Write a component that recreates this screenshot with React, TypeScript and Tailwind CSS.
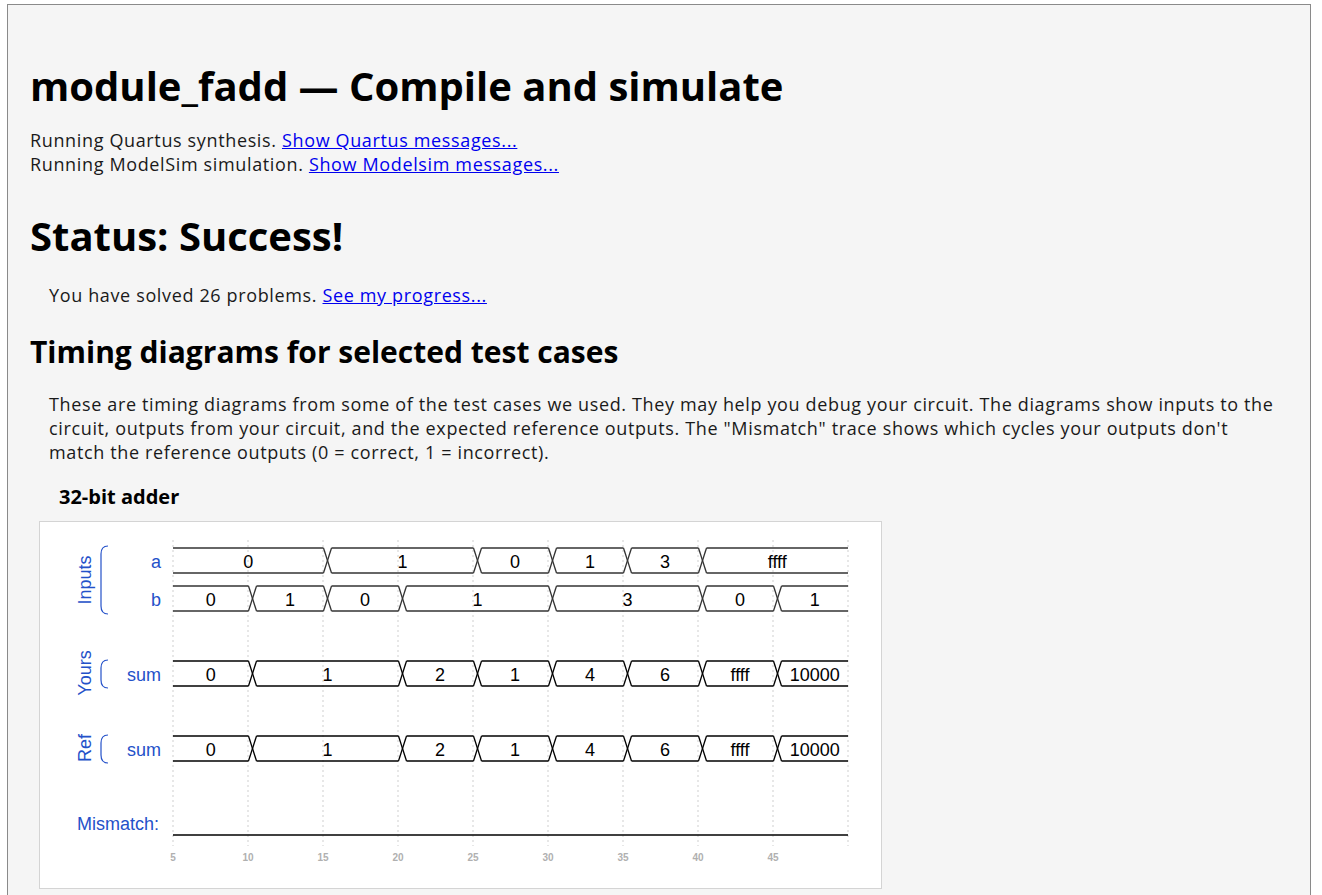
import React from "react";

type Row = { label: string; top: number; times: number[]; values: string[]; stroke: string };

const X0 = 173;
const px = (t: number) => X0 + (t - 5) * 15;
const END = px(50);

const rows: Row[] = [
  { label: "a", top: 548, times: [15, 25, 30, 35, 40], values: ["0", "1", "0", "1", "3", "ffff"], stroke: "#333" },
  { label: "b", top: 586, times: [10, 15, 20, 30, 40, 45], values: ["0", "1", "0", "1", "3", "0", "1"], stroke: "#333" },
  { label: "sum", top: 661, times: [10, 20, 25, 30, 35, 40, 45], values: ["0", "1", "2", "1", "4", "6", "ffff", "10000"], stroke: "#000" },
  { label: "sum", top: 736, times: [10, 20, 25, 30, 35, 40, 45], values: ["0", "1", "2", "1", "4", "6", "ffff", "10000"], stroke: "#000" },
];

const BLUE = "#2451c9";

function Bus({ row }: { row: Row }) {
  const y0 = row.top;
  const y1 = row.top + 25;
  const edges = [X0, ...row.times.map((t) => px(t)), END];
  const parts: React.ReactNode[] = [];
  for (let i = 0; i < edges.length - 1; i++) {
    const a = i === 0 ? edges[i] : edges[i] + 8.5;
    const b = i === edges.length - 2 ? edges[i + 1] : edges[i + 1] + 0.5;
    parts.push(
      <g key={"s" + i}>
        <line x1={a} y1={y0} x2={b} y2={y0} stroke={row.stroke} strokeWidth={1.3} />
        <line x1={a} y1={y1} x2={b} y2={y1} stroke={row.stroke} strokeWidth={1.3} />
        <text x={(a + b) / 2} y={y0 + 19.5} textAnchor="middle" fontSize={18} fill="#000">
          {row.values[i]}
        </text>
      </g>
    );
  }
  row.times.forEach((t, i) => {
    const a = px(t) + 0.5;
    const b = px(t) + 8.5;
    parts.push(
      <g key={"x" + i}>
        <line x1={a} y1={y0} x2={b} y2={y1} stroke={row.stroke} strokeWidth={1.3} />
        <line x1={a} y1={y1} x2={b} y2={y0} stroke={row.stroke} strokeWidth={1.3} />
      </g>
    );
  });
  return (
    <g>
      <text x={161} y={y0 + 19.5} textAnchor="end" fontSize={18} fill={BLUE}>
        {row.label}
      </text>
      {parts}
    </g>
  );
}

function Bracket({ y0, y1 }: { y0: number; y1: number }) {
  return (
    <path
      d={`M108 ${y0} Q101 ${y0} 101 ${y0 + 8} L101 ${y1 - 8} Q101 ${y1} 108 ${y1}`}
      fill="none"
      stroke={BLUE}
      strokeWidth={1.2}
    />
  );
}

function Group({ text, cy }: { text: string; cy: number }) {
  return (
    <text
      x={85}
      y={cy}
      transform={`rotate(-90 85 ${cy})`}
      textAnchor="middle"
      dominantBaseline="central"
      fontSize={18}
      fill={BLUE}
    >
      {text}
    </text>
  );
}

function TimingDiagram() {
  const ticks = [5, 10, 15, 20, 25, 30, 35, 40, 45, 50];
  return (
    <svg width={841} height={366} viewBox="40 522 841 366" style={{ fontFamily: "'Liberation Sans', Arial, sans-serif", letterSpacing: "0" }}>
      {ticks.map((t) => (
        <line key={t} x1={px(t)} y1={540} x2={px(t)} y2={846} stroke="#cfcfcf" strokeWidth={1} strokeDasharray="2 3" />
      ))}
      <Group text="Inputs" cy={580} />
      <Bracket y0={546} y1={614} />
      <Group text="Yours" cy={673} />
      <Bracket y0={660} y1={688} />
      <Group text="Ref" cy={748} />
      <Bracket y0={735} y1={763} />
      {rows.map((r, i) => (
        <Bus key={i} row={r} />
      ))}
      <text x={77} y={830} fontSize={18} fill={BLUE}>
        Mismatch:
      </text>
      <line x1={X0} y1={835} x2={END} y2={835} stroke="#000" strokeWidth={1.3} />
      {ticks.slice(0, 9).map((t) => (
        <text key={t} x={px(t)} y={861} textAnchor="middle" fontSize={10} fontWeight="bold" fill="#b0b0b0">
          {t}
        </text>
      ))}
    </svg>
  );
}

export default function App() {
  const body = { fontFamily: "'Open Sans', Lato, sans-serif", letterSpacing: "0.04em" };
  const head = { fontFamily: "'Open Sans', sans-serif", letterSpacing: "0" };
  return (
    <div className="min-h-screen bg-white pt-[4px] pl-[7px] pr-[11px]">
      <div className="min-h-[900px] border border-[#8a8a8a] bg-[#f5f5f5] px-[22px] pb-10 text-[#1a1a1a]" style={body}>
        <h1 className="mt-[57px] text-[40px] font-bold leading-[48px] text-black" style={head}>
          module_fadd — Compile and simulate
        </h1>
        <p className="mt-[18px] text-[18px] leading-[24px]">
          Running Quartus synthesis.{" "}
          <a href="#" className="text-[#0000ee] underline">
            Show Quartus messages...
          </a>
          <br />
          Running ModelSim simulation.{" "}
          <a href="#" className="text-[#0000ee] underline">
            Show Modelsim messages...
          </a>
        </p>
        <h1 className="mt-[36px] text-[40px] font-bold leading-[48px] text-black" style={head}>
          Status: Success!
        </h1>
        <p className="mt-[23px] pl-[19px] text-[18px] leading-[24px]">
          You have solved 26 problems.{" "}
          <a href="#" className="text-[#0000ee] underline">
            See my progress...
          </a>
        </p>
        <h2 className="mt-[27px] text-[30px] font-bold leading-[36px] text-black" style={head}>
          Timing diagrams for selected test cases
        </h2>
        <p className="mt-[22px] pl-[19px] text-[18px] leading-[24px]">
          These are timing diagrams from some of the test cases we used. They may help you debug your circuit. The
          diagrams show inputs to the circuit, outputs from your circuit, and the expected reference outputs. The
          "Mismatch" trace shows which cycles your outputs don't match the reference outputs (0 = correct, 1 =
          incorrect).
        </p>
        <div className="mt-[21px] pl-[29px] text-[20px] font-bold leading-[24px] text-black" style={head}>
          32-bit adder
        </div>
        <div className="ml-[9px] mt-[12px] inline-block border border-[#d4d4d4] bg-white">
          <TimingDiagram />
        </div>
      </div>
    </div>
  );
}
